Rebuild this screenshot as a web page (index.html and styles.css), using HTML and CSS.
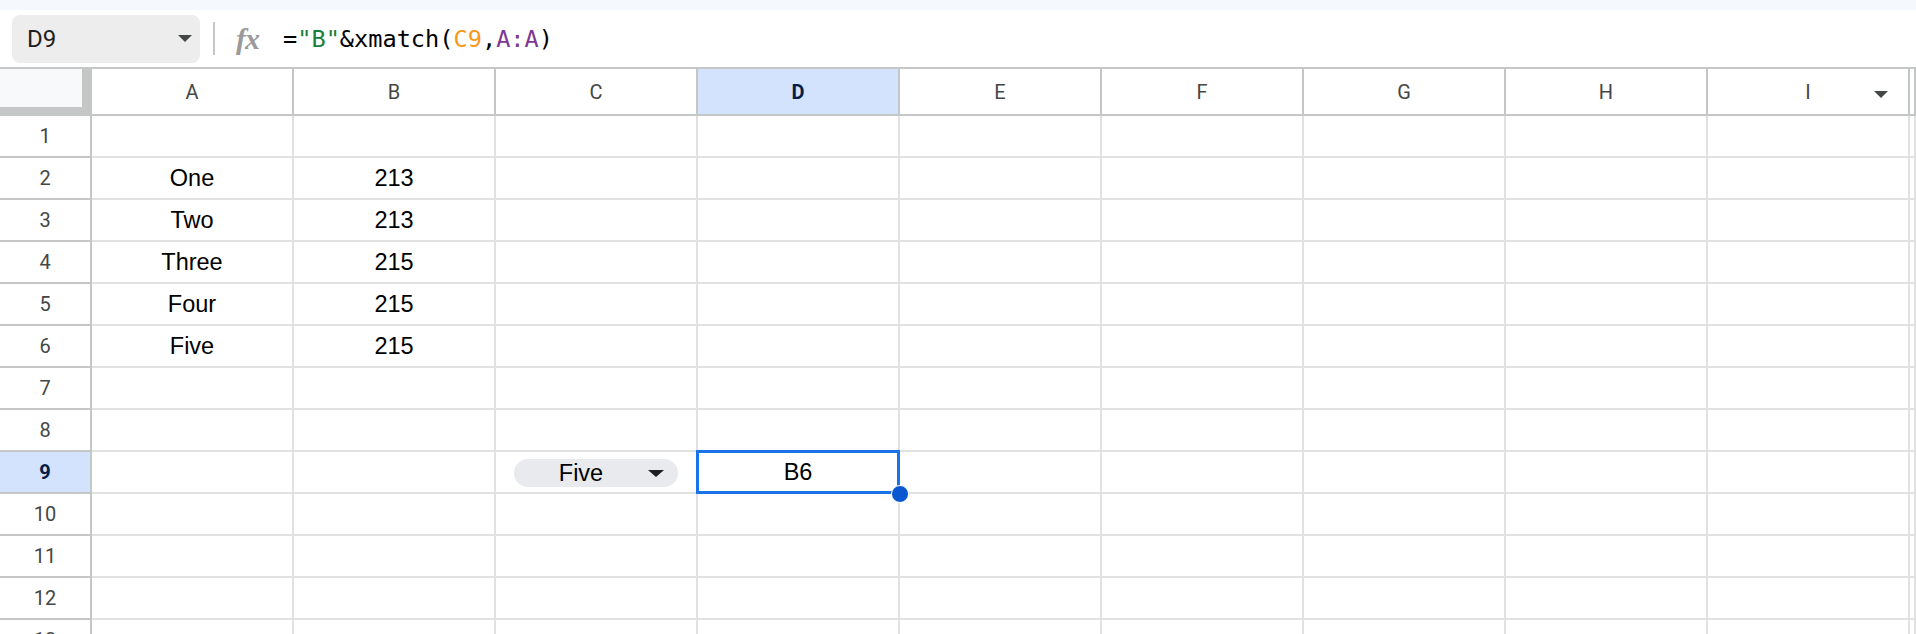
FILE: index.html
```html
<!DOCTYPE html>
<html>
<head>
<meta charset="utf-8">
<link rel="stylesheet" href="styles.css">
</head>
<body>
<div class="topband"></div>
<div class="fbar">
  <div class="namebox"><span class="nb-text">D9</span><span class="caret"></span></div>
  <div class="sep"></div>
  <div class="fx">fx</div>
  <div class="formula">=<span class="f-str">"B"</span>&amp;xmatch(<span class="f-ref1">C9</span>,<span class="f-ref2">A:A</span>)</div>
</div>
<div class="sheet">
  <div class="row head">
    <div class="corner"></div>
    <div class="ch">A</div>
    <div class="ch">B</div>
    <div class="ch">C</div>
    <div class="ch sel">D</div>
    <div class="ch">E</div>
    <div class="ch">F</div>
    <div class="ch">G</div>
    <div class="ch">H</div>
    <div class="ch">I<span class="hcaret"></span></div>
    <div class="ch rest"></div>
  </div>
  <div class="row"><div class="rh">1</div><div class="c"></div><div class="c"></div><div class="c"></div><div class="c"></div><div class="c"></div><div class="c"></div><div class="c"></div><div class="c"></div><div class="c"></div><div class="c rest"></div></div>
  <div class="row"><div class="rh">2</div><div class="c">One</div><div class="c">213</div><div class="c"></div><div class="c"></div><div class="c"></div><div class="c"></div><div class="c"></div><div class="c"></div><div class="c"></div><div class="c rest"></div></div>
  <div class="row"><div class="rh">3</div><div class="c">Two</div><div class="c">213</div><div class="c"></div><div class="c"></div><div class="c"></div><div class="c"></div><div class="c"></div><div class="c"></div><div class="c"></div><div class="c rest"></div></div>
  <div class="row"><div class="rh">4</div><div class="c">Three</div><div class="c">215</div><div class="c"></div><div class="c"></div><div class="c"></div><div class="c"></div><div class="c"></div><div class="c"></div><div class="c"></div><div class="c rest"></div></div>
  <div class="row"><div class="rh">5</div><div class="c">Four</div><div class="c">215</div><div class="c"></div><div class="c"></div><div class="c"></div><div class="c"></div><div class="c"></div><div class="c"></div><div class="c"></div><div class="c rest"></div></div>
  <div class="row"><div class="rh">6</div><div class="c">Five</div><div class="c">215</div><div class="c"></div><div class="c"></div><div class="c"></div><div class="c"></div><div class="c"></div><div class="c"></div><div class="c"></div><div class="c rest"></div></div>
  <div class="row"><div class="rh">7</div><div class="c"></div><div class="c"></div><div class="c"></div><div class="c"></div><div class="c"></div><div class="c"></div><div class="c"></div><div class="c"></div><div class="c"></div><div class="c rest"></div></div>
  <div class="row"><div class="rh">8</div><div class="c"></div><div class="c"></div><div class="c"></div><div class="c"></div><div class="c"></div><div class="c"></div><div class="c"></div><div class="c"></div><div class="c"></div><div class="c rest"></div></div>
  <div class="row"><div class="rh sel">9</div><div class="c"></div><div class="c"></div><div class="c"><div class="chip"><span class="chip-text">Five</span><span class="chip-caret"></span></div></div><div class="c">B6<div class="selbox"><div class="handle"></div></div></div><div class="c"></div><div class="c"></div><div class="c"></div><div class="c"></div><div class="c"></div><div class="c rest"></div></div>
  <div class="row"><div class="rh">10</div><div class="c"></div><div class="c"></div><div class="c"></div><div class="c"></div><div class="c"></div><div class="c"></div><div class="c"></div><div class="c"></div><div class="c"></div><div class="c rest"></div></div>
  <div class="row"><div class="rh">11</div><div class="c"></div><div class="c"></div><div class="c"></div><div class="c"></div><div class="c"></div><div class="c"></div><div class="c"></div><div class="c"></div><div class="c"></div><div class="c rest"></div></div>
  <div class="row"><div class="rh">12</div><div class="c"></div><div class="c"></div><div class="c"></div><div class="c"></div><div class="c"></div><div class="c"></div><div class="c"></div><div class="c"></div><div class="c"></div><div class="c rest"></div></div>
  <div class="row"><div class="rh">13</div><div class="c"></div><div class="c"></div><div class="c"></div><div class="c"></div><div class="c"></div><div class="c"></div><div class="c"></div><div class="c"></div><div class="c"></div><div class="c rest"></div></div>
</div>
</body>
</html>
```
FILE: styles.css
```css
* { box-sizing: border-box; }
html, body { margin: 0; padding: 0; }
body {
  width: 1916px;
  height: 634px;
  overflow: hidden;
  background: #ffffff;
  font-family: Roboto, "Liberation Sans", sans-serif;
}
.topband { height: 10px; background: #f5f8fc; }
.fbar { height: 57px; display: flex; align-items: center; }
.namebox {
  margin-left: 12px;
  width: 188px;
  height: 48px;
  border-radius: 8px;
  background: #ededed;
  display: flex;
  align-items: center;
  justify-content: space-between;
  padding: 0 8px 0 15px;
  font-size: 24px;
  color: #1f1f1f;
}
.caret {
  width: 0; height: 0;
  border-left: 7.5px solid transparent;
  border-right: 7.5px solid transparent;
  border-top: 7px solid #444746;
}
.sep { margin-left: 13px; width: 2px; height: 33px; background: #c7c7c7; }
.fx {
  margin-left: 21px;
  width: 27px;
  font-family: "Liberation Serif", serif;
  font-style: italic;
  font-weight: 700;
  font-size: 30px;
  letter-spacing: -1px;
  color: #9a9a9a;
  line-height: 1;
}
.formula {
  margin-left: 20px;
  font-family: "DejaVu Sans Mono", "Liberation Mono", monospace;
  font-size: 23.6px;
  color: #000;
}
.f-str { color: #188038; }
.f-ref1 { color: #f7981d; }
.f-ref2 { color: #7e3794; }

.sheet { display: flex; flex-direction: column; }
.row { display: flex; height: 42px; flex: none; }
.row.head { height: 49px; border-top: 2px solid #c4c7c5; }
.corner {
  width: 92px;
  flex: none;
  background: #f8f9fa;
  border-right: 10px solid #c4c7c5;
  border-bottom: 9px solid #c4c7c5;
}
.ch {
  width: 202px;
  flex: none;
  border-right: 2px solid #c4c7c5;
  border-bottom: 2px solid #c4c7c5;
  display: flex;
  align-items: center;
  justify-content: center;
  font-size: 20px;
  color: #444746;
  position: relative;
}
.ch.sel, .rh.sel { background: #d3e3fd; color: #041e49; font-weight: 700; }
.hcaret {
  position: absolute;
  right: 20px;
  top: 22px;
  width: 0; height: 0;
  border-left: 7.5px solid transparent;
  border-right: 7.5px solid transparent;
  border-top: 7px solid #444746;
}
.rh {
  width: 92px;
  flex: none;
  border-right: 2px solid #c4c7c5;
  border-bottom: 2px solid #c4c7c5;
  display: flex;
  align-items: center;
  justify-content: center;
  font-size: 20px;
  color: #444746;
}
.c {
  width: 202px;
  flex: none;
  border-right: 2px solid #e1e1e1;
  border-bottom: 2px solid #e1e1e1;
  display: flex;
  align-items: center;
  justify-content: center;
  font-family: "Liberation Sans", Arial, sans-serif;
  font-size: 23.5px;
  color: #000;
  position: relative;
}
.rest { flex: 1 1 auto; width: auto; }
.chip {
  width: 164px;
  height: 28px;
  border-radius: 14px;
  background: #e8eaed;
  display: flex;
  align-items: center;
  margin-top: 2px;
}
.chip-text { width: 134px; text-align: center; }
.chip-caret {
  width: 0; height: 0;
  border-left: 8.5px solid transparent;
  border-right: 8.5px solid transparent;
  border-top: 7px solid #1f1f1f;
}
.selbox {
  position: absolute;
  left: -2px; top: -2px; right: -2px; bottom: -2px;
  border: 3px solid #1a73e8;
  z-index: 2;
}
.handle {
  position: absolute;
  right: -12px;
  bottom: -12px;
  width: 18px;
  height: 18px;
  border-radius: 50%;
  background: #0b57d0;
  border: 1px solid #ffffff;
}
```
